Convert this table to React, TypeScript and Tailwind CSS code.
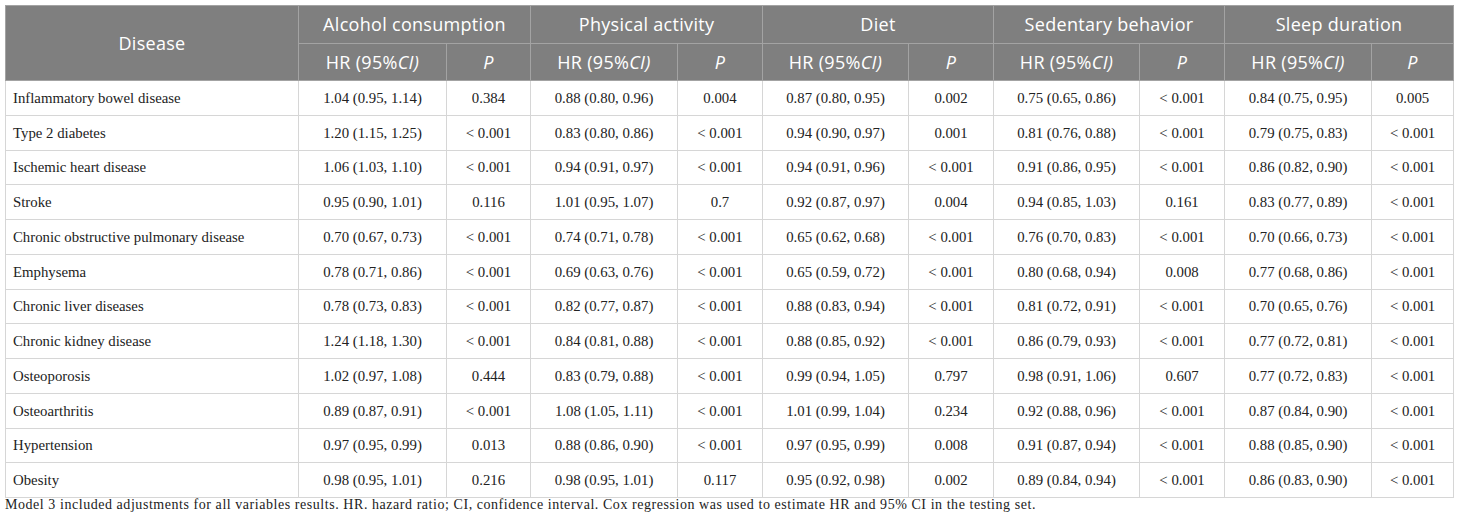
import React from "react";

const rows: string[][] = [
  ["Inflammatory bowel disease", "1.04 (0.95, 1.14)", "0.384", "0.88 (0.80, 0.96)", "0.004", "0.87 (0.80, 0.95)", "0.002", "0.75 (0.65, 0.86)", "< 0.001", "0.84 (0.75, 0.95)", "0.005"],
  ["Type 2 diabetes", "1.20 (1.15, 1.25)", "< 0.001", "0.83 (0.80, 0.86)", "< 0.001", "0.94 (0.90, 0.97)", "0.001", "0.81 (0.76, 0.88)", "< 0.001", "0.79 (0.75, 0.83)", "< 0.001"],
  ["Ischemic heart disease", "1.06 (1.03, 1.10)", "< 0.001", "0.94 (0.91, 0.97)", "< 0.001", "0.94 (0.91, 0.96)", "< 0.001", "0.91 (0.86, 0.95)", "< 0.001", "0.86 (0.82, 0.90)", "< 0.001"],
  ["Stroke", "0.95 (0.90, 1.01)", "0.116", "1.01 (0.95, 1.07)", "0.7", "0.92 (0.87, 0.97)", "0.004", "0.94 (0.85, 1.03)", "0.161", "0.83 (0.77, 0.89)", "< 0.001"],
  ["Chronic obstructive pulmonary disease", "0.70 (0.67, 0.73)", "< 0.001", "0.74 (0.71, 0.78)", "< 0.001", "0.65 (0.62, 0.68)", "< 0.001", "0.76 (0.70, 0.83)", "< 0.001", "0.70 (0.66, 0.73)", "< 0.001"],
  ["Emphysema", "0.78 (0.71, 0.86)", "< 0.001", "0.69 (0.63, 0.76)", "< 0.001", "0.65 (0.59, 0.72)", "< 0.001", "0.80 (0.68, 0.94)", "0.008", "0.77 (0.68, 0.86)", "< 0.001"],
  ["Chronic liver diseases", "0.78 (0.73, 0.83)", "< 0.001", "0.82 (0.77, 0.87)", "< 0.001", "0.88 (0.83, 0.94)", "< 0.001", "0.81 (0.72, 0.91)", "< 0.001", "0.70 (0.65, 0.76)", "< 0.001"],
  ["Chronic kidney disease", "1.24 (1.18, 1.30)", "< 0.001", "0.84 (0.81, 0.88)", "< 0.001", "0.88 (0.85, 0.92)", "< 0.001", "0.86 (0.79, 0.93)", "< 0.001", "0.77 (0.72, 0.81)", "< 0.001"],
  ["Osteoporosis", "1.02 (0.97, 1.08)", "0.444", "0.83 (0.79, 0.88)", "< 0.001", "0.99 (0.94, 1.05)", "0.797", "0.98 (0.91, 1.06)", "0.607", "0.77 (0.72, 0.83)", "< 0.001"],
  ["Osteoarthritis", "0.89 (0.87, 0.91)", "< 0.001", "1.08 (1.05, 1.11)", "< 0.001", "1.01 (0.99, 1.04)", "0.234", "0.92 (0.88, 0.96)", "< 0.001", "0.87 (0.84, 0.90)", "< 0.001"],
  ["Hypertension", "0.97 (0.95, 0.99)", "0.013", "0.88 (0.86, 0.90)", "< 0.001", "0.97 (0.95, 0.99)", "0.008", "0.91 (0.87, 0.94)", "< 0.001", "0.88 (0.85, 0.90)", "< 0.001"],
  ["Obesity", "0.98 (0.95, 1.01)", "0.216", "0.98 (0.95, 1.01)", "0.117", "0.95 (0.92, 0.98)", "0.002", "0.89 (0.84, 0.94)", "< 0.001", "0.86 (0.83, 0.90)", "< 0.001"],
];

const groups = ["Alcohol consumption", "Physical activity", "Diet", "Sedentary behavior", "Sleep duration"];
const widths = [293, 148, 84, 147, 85, 146, 85, 146, 85, 147, 82];

export default function App() {
  return (
    <div className="w-[1460px] h-[525px] bg-white pt-[5px] pl-[5px]">
      <table
        className="table-fixed border-collapse w-[1448px] text-[#222]"
        style={{ fontFamily: '"Liberation Serif", "Times New Roman", serif' }}
      >
        <colgroup>
          {widths.map((w, i) => (
            <col key={i} style={{ width: w }} />
          ))}
        </colgroup>
        <thead
          className="bg-[#7f7f7f] text-white text-[18px] tracking-[0.3px]"
          style={{ fontFamily: '"Open Sans", "Noto Sans", sans-serif' }}
        >
          <tr className="h-[38px]">
            <th rowSpan={2} className="font-normal border border-[#a3a3a3] text-center">
              Disease
            </th>
            {groups.map((g) => (
              <th key={g} colSpan={2} className="font-normal border border-[#a3a3a3] text-center">
                {g}
              </th>
            ))}
          </tr>
          <tr className="h-[37px]">
            {groups.map((g) => (
              <React.Fragment key={g}>
                <th className="font-normal border border-[#a3a3a3] text-center">
                  HR (95%<i>CI)</i>
                </th>
                <th className="font-normal border border-[#a3a3a3] text-center">
                  <i>P</i>
                </th>
              </React.Fragment>
            ))}
          </tr>
        </thead>
        <tbody className="text-[14.8px]">
          {rows.map((r, i) => (
            <tr key={i} className="h-[34.75px]">
              {r.map((c, j) => (
                <td
                  key={j}
                  className={`border border-[#d6d6d6] whitespace-nowrap ${j === 0 ? "text-left pl-[7px]" : "text-center"}`}
                >
                  {c}
                </td>
              ))}
            </tr>
          ))}
        </tbody>
      </table>
      <div
        className="text-[14px] tracking-[0.55px] text-[#222] leading-[14px] whitespace-nowrap"
        style={{ fontFamily: '"Liberation Serif", "Times New Roman", serif' }}
      >
        Model 3 included adjustments for all variables results. HR. hazard ratio; CI, confidence interval. Cox regression was used to estimate HR and 95% CI in the testing set.
      </div>
    </div>
  );
}
